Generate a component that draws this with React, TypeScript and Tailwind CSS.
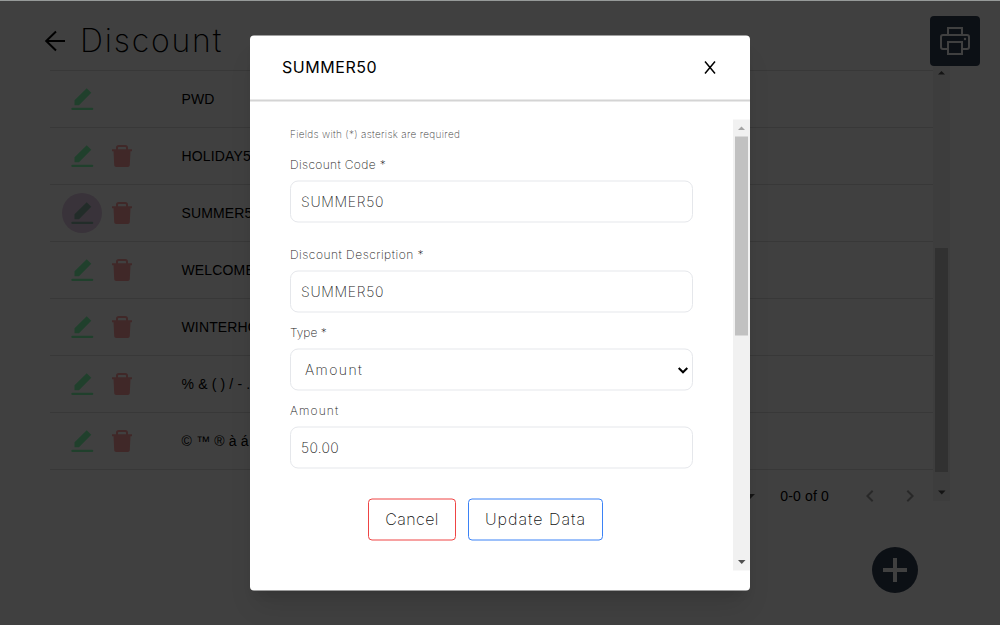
import type { ReactNode } from "react";

const rows = [
  { code: "PWD", removable: false, active: false },
  { code: "HOLIDAY50", removable: true, active: false },
  { code: "SUMMER50", removable: true, active: true },
  { code: "WELCOME", removable: true, active: false },
  { code: "WINTERHO", removable: true, active: false },
  { code: "% & ( ) / - . ,", removable: true, active: false },
  { code: "© ™ ® à á â", removable: true, active: false },
];

function EditIcon() {
  return (
    <svg className="h-6 w-6 shrink-0" viewBox="0 0 24 24" fill="currentColor">
      <path d="M4.500 18.200v-5L16.700 1.200 21.300 5.800 9 18.200H5.500z" />
      <rect x="1.300" y="20.700" width="22" height="2.300" rx="1.100" />
    </svg>
  );
}

function TrashIcon() {
  return (
    <svg className="h-6 w-6 shrink-0" viewBox="0 0 24 24" fill="currentColor">
      <path
        fillRule="evenodd"
        d="M2 5.200h4V3.600C6 2 7 1 8.500 1h7C17 1 18 2 18 3.600v1.600h4v2h-1.500l-.7 13.800c0 1.200-.8 2-2 2H6.200c-1.200 0-2-.8-2-2L3.500 7.200H2zM8 5.200h8V3.800c0-.5-.3-.8-.8-.8H8.800c-.5 0-.8.300-.8.800z"
      />
    </svg>
  );
}

function Triangle({ up = false }: { up?: boolean }) {
  return (
    <svg className="h-[17px] w-[17px] shrink-0" viewBox="0 0 17 17" fill="currentColor">
      {up ? <path d="M5 10.500h7L8.500 7z" /> : <path d="M5 6.500h7.500L8.750 10.500z" />}
    </svg>
  );
}

function Field({ label, children }: { label: ReactNode; children: ReactNode }) {
  return (
    <label className="flex flex-col">
      <span className="mb-2 text-[12px] leading-4 text-[#222]">{label}</span>
      {children}
    </label>
  );
}

function Box({ children }: { children: ReactNode }) {
  return (
    <span className="flex h-[42px] items-center justify-between rounded-lg border border-[#e5e7eb] px-2.5 pb-px text-[14px] text-[#222]">
      {children}
    </span>
  );
}

function Page() {
  return (
    <div className="flex h-full flex-col bg-white font-['Liberation_Sans',sans-serif] text-[14px] text-black">
      <header className="flex h-[66px] shrink-0 items-start justify-between pr-5 pl-[43px]">
        <div className="flex items-center pt-4">
          <svg className="h-6 w-6" viewBox="0 0 24 24" fill="none" stroke="currentColor" strokeWidth="2">
            <path d="M22 12H3M13 2.500 3.200 12l9.800 9.500" />
          </svg>
          <h1 className="ml-[13px] font-['Inter',sans-serif] text-[32px] leading-[50px] font-extralight tracking-[1.800px]">
            Discount
          </h1>
        </div>
        <button className="mt-4 flex h-[50px] w-[50px] items-center justify-center rounded bg-[#334155] text-white">
          <svg className="h-[30px] w-[30px]" viewBox="0 0 30 30" fill="none" stroke="currentColor" strokeWidth="2">
            <path d="M8 9V2h14v7M8 23H3c-1.300 0-2-.7-2-2V11c0-1.300.7-2 2-2h24c1.300 0 2 .7 2 2v10c0 1.300-.7 2-2 2h-5M8 16h14v12H8z" />
            <circle cx="25" cy="13" r="1.200" fill="currentColor" stroke="none" />
          </svg>
        </button>
      </header>

      <div className="ml-[50px] flex h-[435px] w-[900px] shrink-0">
        <div className="flex w-[883px] flex-col pt-1">
          {rows.map((row) => (
            <div key={row.code} className="flex h-[57px] shrink-0 items-center border-t border-[#e0e0e0] pl-3">
              <div
                className={
                  row.active
                    ? "flex h-10 w-10 items-center justify-center rounded-full bg-[#e2cbe5] text-[#88b0a4]"
                    : "flex h-10 w-10 items-center justify-center text-[#80ffb0]"
                }
              >
                <EditIcon />
              </div>
              <div className="flex h-10 w-10 items-center justify-center text-[#ffa0a0]">
                {row.removable && <TrashIcon />}
              </div>
              <span className="ml-[39.500px] tracking-[0.150px] whitespace-nowrap">{row.code}</span>
            </div>
          ))}
          <div className="flex h-[53px] shrink-0 items-center justify-end border-t border-[#e0e0e0] pr-[11px]">
            <svg className="h-2 w-3 text-[#555]" viewBox="0 0 12 8" fill="currentColor">
              <path d="M1 2h10L6 7z" />
            </svg>
            <span className="ml-6 pt-px tracking-[0.150px]">0-0 of 0</span>
            <svg className="ml-[29px] h-6 w-6 text-[#a0a0a0]" viewBox="0 0 24 24" fill="none" stroke="currentColor" strokeWidth="2">
              <path d="m14.700 6.700-5.300 5.300 5.300 5.300" />
            </svg>
            <svg className="ml-4 h-6 w-6 text-[#a0a0a0]" viewBox="0 0 24 24" fill="none" stroke="currentColor" strokeWidth="2">
              <path d="m9.300 6.700 5.300 5.300-5.300 5.300" />
            </svg>
          </div>
        </div>
        <div className="flex w-[17px] flex-col items-center bg-[#f1f1f1] text-[#505050]">
          <div className="-mt-0.5 flex">
            <Triangle up />
          </div>
          <div className="mt-[167px] h-[224px] w-[13px] bg-[#c1c1c1]" />
          <div className="mt-auto flex">
            <Triangle />
          </div>
        </div>
      </div>

      <button className="mt-[46px] ml-[872px] flex h-[46px] w-[46px] shrink-0 items-center justify-center rounded-full bg-[#334155] text-white">
        <svg className="h-6 w-6" viewBox="0 0 24 24" fill="none" stroke="currentColor" strokeWidth="4">
          <path d="M12 0v24M0 12h24" />
        </svg>
      </button>
    </div>
  );
}

function DiscountDialog() {
  return (
    <section className="flex h-[555px] w-[500px] translate-y-[0.500px] flex-col rounded bg-white font-['Inter',sans-serif] font-light shadow-xl">
      <header className="flex h-[66px] shrink-0 items-center justify-between border-b-2 border-[#d4d4d4] pr-[33px] pl-8 text-black">
        <h2 className="pb-0.5 text-[16px] leading-6 font-normal tracking-[0.550px]">SUMMER50</h2>
        <svg className="h-[14px] w-[14px]" viewBox="0 0 14 14" fill="none" stroke="currentColor" strokeWidth="1.500">
          <path d="m2 1 10 12M12 1 2 13" />
        </svg>
      </header>
      <div className="mt-[18px] flex h-[451px] shrink-0">
        <form className="flex w-[483px] flex-col pr-10 pl-10 font-extralight">
          <p className="mt-1.5 h-[31px] text-[10px] leading-4 tracking-[0.310px] text-[#444]">
            Fields with (*) asterisk are required
          </p>
          <Field label={<span className="tracking-[0.350px]">Discount Code *</span>}>
            <Box>
              <span className="tracking-[0.700px]">SUMMER50</span>
            </Box>
          </Field>
          <div className="mt-6">
            <Field label={<span className="tracking-[0.500px]">Discount Description *</span>}>
              <Box>
                <span className="tracking-[0.700px]">SUMMER50</span>
              </Box>
            </Field>
          </div>
          <div className="mt-3">
            <Field label="Type *">
              <Box>
                <span className="ml-1 tracking-[1.400px]">Amount</span>
                <svg className="-mr-[7px] h-3 w-3 text-black" viewBox="0 0 12 12" fill="none" stroke="currentColor" strokeWidth="2">
                  <path d="m1.700 4.500 4.300 4.300 4.300-4.300" />
                </svg>
              </Box>
            </Field>
          </div>
          <div className="mt-3">
            <Field label={<span className="tracking-[1.100px]">Amount</span>}>
              <Box>
                <span className="tracking-[0.300px]">50.00</span>
              </Box>
            </Field>
          </div>
          <div className="mt-[30px] flex justify-center gap-3 pr-3 text-[16px] text-[#111]">
            <button type="button" className="h-[42px] w-[88px] rounded border border-[#ef4444] pb-0.5 tracking-[0.400px]">
              Cancel
            </button>
            <button type="button" className="h-[42px] w-[135px] rounded border border-[#3b82f6] pb-0.5 tracking-[1px]">
              Update Data
            </button>
          </div>
        </form>
        <div className="flex w-[17px] flex-col items-center bg-[#f1f1f1]">
          <span className="flex text-[#a3a3a3]">
            <Triangle up />
          </span>
          <div className="h-[199px] w-[13px] bg-[#c1c1c1]" />
          <span className="mt-auto flex text-[#505050]">
            <Triangle />
          </span>
        </div>
      </div>
    </section>
  );
}

export default function App() {
  return (
    <div className="relative h-[625px] w-[1000px] overflow-hidden">
      <Page />
      <div className="absolute inset-0 flex items-start justify-center border-t border-[#969a99] bg-black/75 pt-[34px]">
        <DiscountDialog />
      </div>
    </div>
  );
}
